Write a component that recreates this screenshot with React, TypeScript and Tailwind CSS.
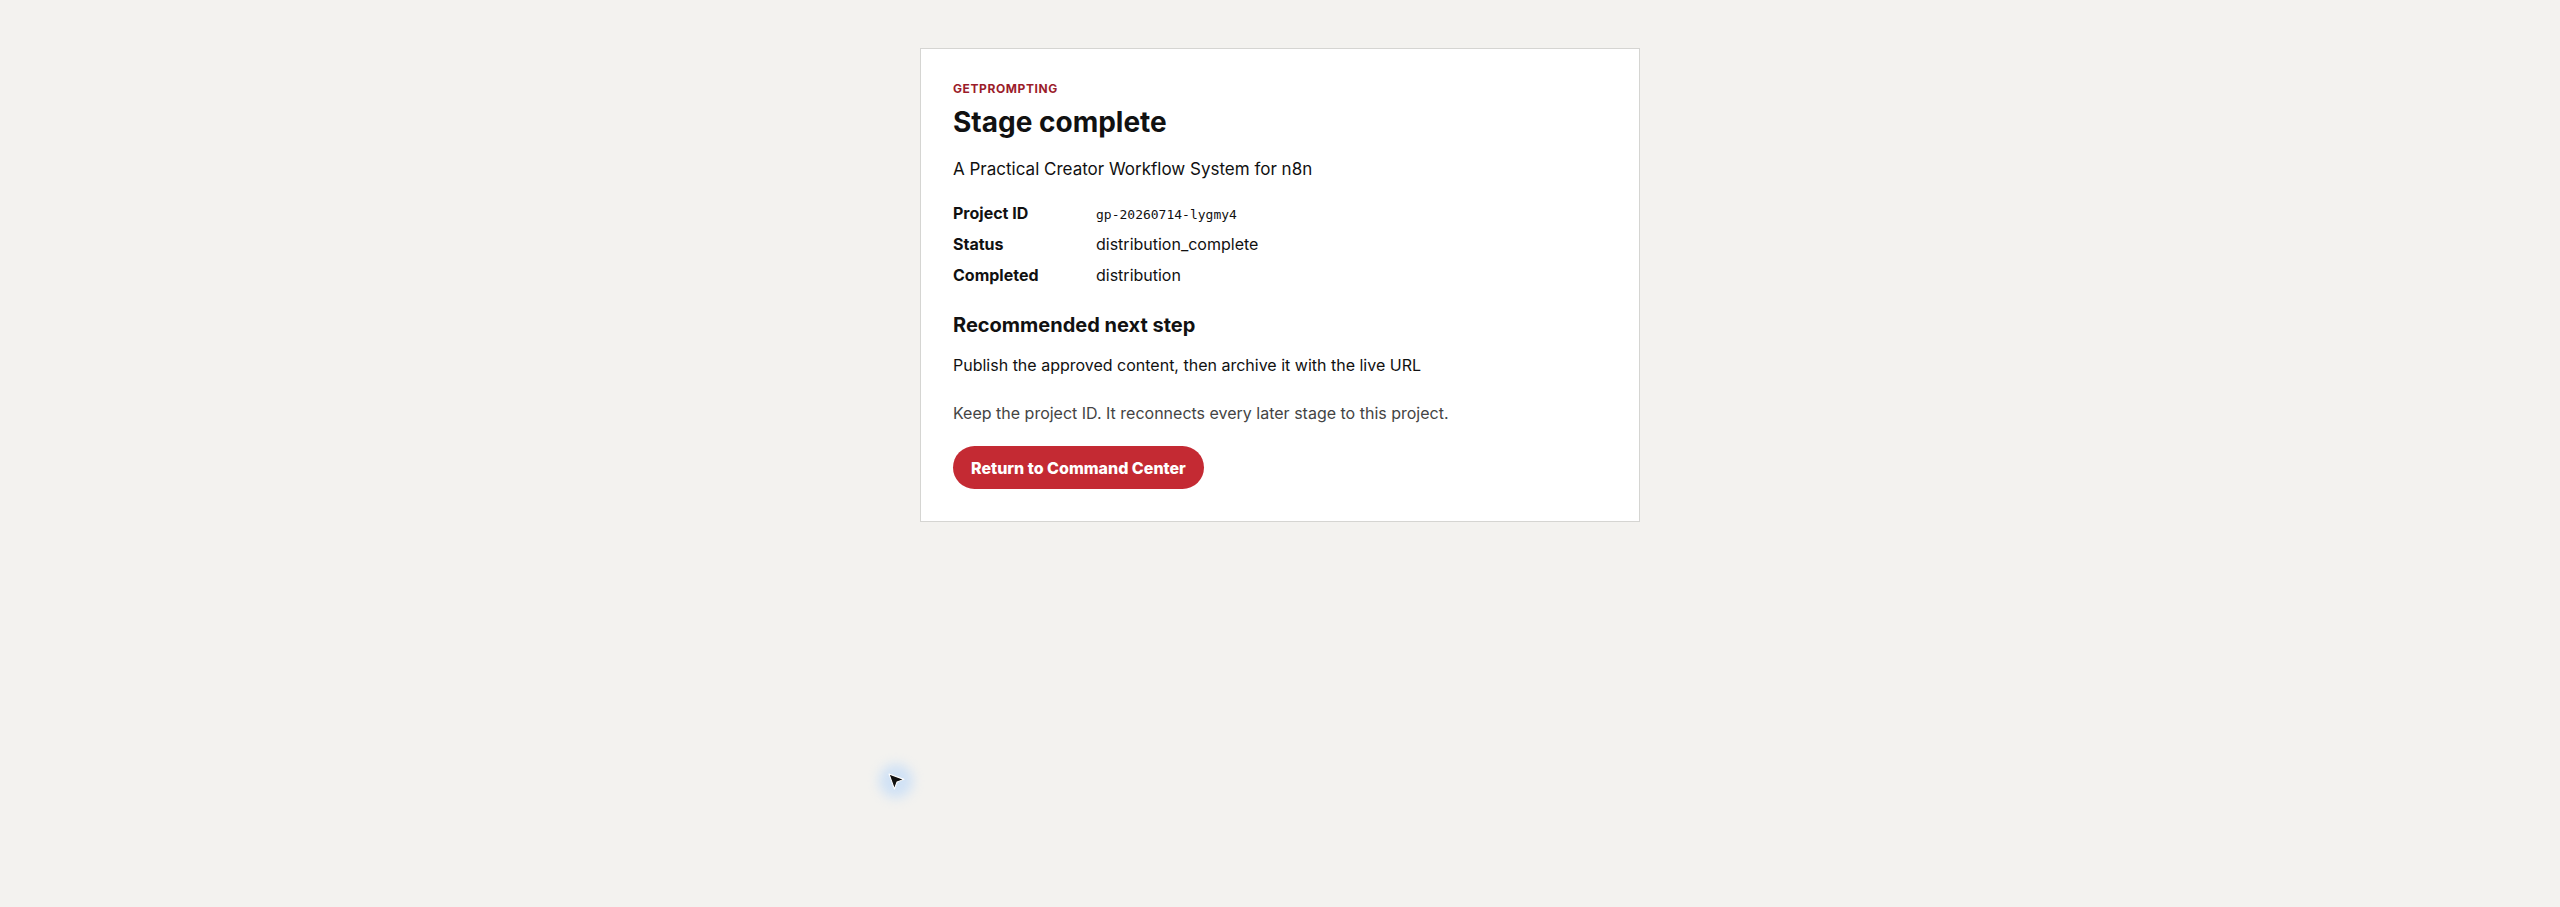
const details = [
  { label: 'Project ID', value: 'gp-20260714-lygmy4', mono: true },
  { label: 'Status', value: 'distribution_complete' },
  { label: 'Completed', value: 'distribution' },
];

function Cursor() {
  return (
    <div className="pointer-events-none absolute left-[879px] top-[764px] h-[34px] w-[34px]">
      <div className="absolute inset-0 rounded-full bg-[#9cc9ff] opacity-40 blur-[6px]" />
      <svg className="absolute left-[9px] top-[9px] h-[17px] w-[17px]" viewBox="0 0 16 16">
        <path d="M1 1 L15 6 L8.5 8.5 L6 15 Z" fill="#111" stroke="#fff" strokeWidth="1" strokeLinejoin="round" />
      </svg>
    </div>
  );
}

export default function App() {
  return (
    <div className="relative min-h-[907px] bg-[#f3f2ef] pt-12 font-['Inter','Liberation_Sans',sans-serif] text-[#111111]">
      <div className="mx-auto w-[720px] border border-[#d5d5d2] bg-white p-8">
        <p className="text-xs leading-4 font-bold uppercase tracking-wider text-[#9b1c2a]">GetPrompting</p>
        <h1 className="mt-2 text-[28px] leading-[34px] font-bold">Stage complete</h1>
        <p className="mt-[18px] text-[17px] leading-6">A Practical Creator Workflow System for n8n</p>

        <dl className="mt-5 grid grid-cols-[143px_1fr] gap-y-[7px] text-base leading-6">
          {details.map((d) => (
            <div key={d.label} className="contents">
              <dt className="font-bold">{d.label}</dt>
              <dd className={d.mono ? "pt-1 font-['DejaVu_Sans_Mono',monospace] text-[13px] leading-5" : ''}>
                {d.value}
              </dd>
            </div>
          ))}
        </dl>

        <h2 className="mt-6 text-xl leading-7 font-bold">Recommended next step</h2>
        <p className="mt-[14px] text-base leading-6">Publish the approved content, then archive it with the live URL</p>
        <p className="mt-6 text-base leading-6 text-[#444444]">
          Keep the project ID. It reconnects every later stage to this project.
        </p>

        <button
          type="button"
          className="mt-[21px] flex h-[43px] items-center rounded-full bg-[#c42a33] px-[18px] text-base font-extrabold text-white"
        >
          Return to Command Center
        </button>
      </div>
      <Cursor />
    </div>
  );
}
